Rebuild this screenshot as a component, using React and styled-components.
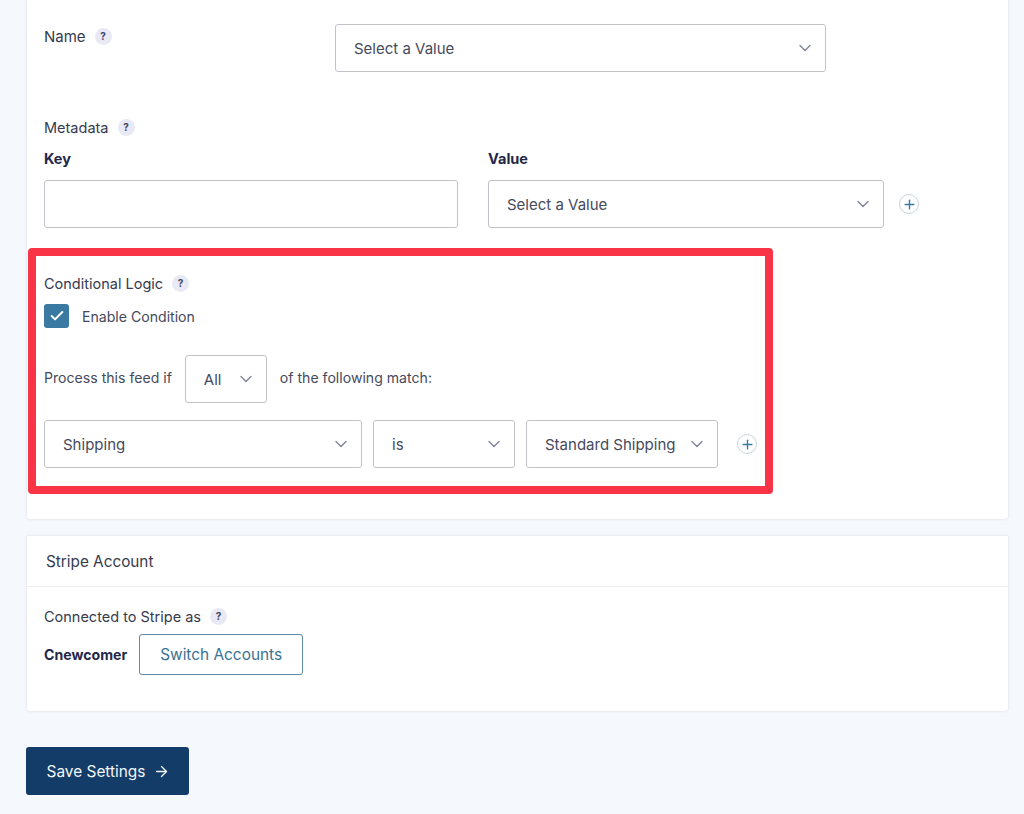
import styled, { createGlobalStyle } from "styled-components";
import { ArrowRight, Check, ChevronDown, Plus } from "lucide-react";

const GlobalStyle = createGlobalStyle`
  html, body {
    margin: 0;
    background: #f5f8fc;
  }

  body {
    font-family: Inter, "Liberation Sans", sans-serif;
    font-size: 14.1px;
    color: #464a5c;
    -webkit-font-smoothing: antialiased;
  }
`;

const Page = styled.div`
  width: 1024px;
  height: 814px;
  overflow: hidden;
  box-sizing: border-box;
  padding: 0 16px 0 26px;
`;

const Card = styled.section`
  box-sizing: border-box;
  margin-left: 1px;
  height: ${(props) => props.$height}px;
  margin-bottom: 17px;
  background: #fff;
  border-radius: 0 0 3px 3px;
  box-shadow: 0 0 3px rgba(40, 60, 90, 0.14);
`;

const CardBody = styled.div`
  padding: ${(props) => props.$pad || "24px 0 0 17px"};
`;

const NameRow = styled.div`
  display: grid;
  grid-template-columns: 291px 491px;
  height: 48px;
`;

const Label = styled.div`
  display: flex;
  align-items: center;
  gap: 9px;
  height: 24px;
  font-size: 14.5px;
  color: #363a4d;
`;

const NameLabel = styled(Label)`
  font-size: 15px;
`;

const Help = styled.span`
  display: inline-flex;
  align-items: center;
  justify-content: center;
  width: 17px;
  height: 17px;
  border-radius: 50%;
  background: #e9e9f6;
  color: #3d4668;
  font-size: 10px;
  font-weight: 700;
`;

const MetaLabel = styled(Label)`
  margin-top: 43px;
`;

const FieldGrid = styled.div`
  display: grid;
  grid-template-columns: 414px 396px 20px;
  column-gap: 30px;
  margin-top: 12px;
`;

const FieldHead = styled.div`
  height: 29px;
  line-height: 16px;
  font-size: 14.5px;
  font-weight: 700;
  color: #242748;
`;

const Column = styled.div`
  display: flex;
  flex-direction: column;
`;

const TextInput = styled.input`
  box-sizing: border-box;
  width: 100%;
  height: 48px;
  border: 1px solid #c2c3c8;
  border-radius: 3px;
  background: #fff;
`;

const Select = styled.div`
  box-sizing: border-box;
  flex: none;
  display: flex;
  align-items: center;
  justify-content: space-between;
  width: ${(props) => (props.$width ? `${props.$width}px` : "100%")};
  height: 48px;
  padding: 0 10px 0 18px;
  border: 1px solid #c2c3c8;
  border-radius: 3px;
  background: #fff;
  color: #464a5c;
  font-size: 15px;
  white-space: nowrap;

  svg {
    flex: none;
    color: #82879a;
  }
`;

const AddButton = styled.span`
  box-sizing: border-box;
  flex: none;
  display: inline-flex;
  align-items: center;
  justify-content: center;
  width: 20px;
  height: 20px;
  border: 1px solid #c8d5de;
  border-radius: 50%;
  color: #3a7a9e;
`;

const AddSlot = styled.div`
  display: flex;
  align-items: center;
  margin-top: 29px;
  margin-left: -15px;
`;

const Highlight = styled.div`
  box-sizing: border-box;
  width: 745px;
  height: 246px;
  margin: 20px 0 0 -16px;
  padding: 15px 0 0 8px;
  border: 8px solid #f83446;
  border-radius: 4px;
`;

const CheckRow = styled.div`
  display: flex;
  align-items: center;
  gap: 13px;
  margin-top: 9px;
`;

const CheckBox = styled.span`
  display: inline-flex;
  align-items: center;
  justify-content: center;
  width: 25px;
  height: 24px;
  border-radius: 3px;
  background: #3a79a2;
  color: #fff;
`;

const SentenceRow = styled.div`
  display: flex;
  align-items: center;
  gap: 13px;
  margin-top: 27px;
`;

const SentenceText = styled.span`
  margin-bottom: 4px;
`;

const RuleRow = styled.div`
  display: flex;
  align-items: center;
  gap: 11px;
  margin-top: 17px;
`;

const RuleAdd = styled(AddButton)`
  margin-left: 8px;
`;

const CardHeader = styled.header`
  box-sizing: border-box;
  height: 51px;
  padding: 1px 0 0 19px;
  display: flex;
  align-items: center;
  border-bottom: 1px solid #eceef2;
  font-size: 15.3px;
  color: #363a4d;
`;

const AccountRow = styled.div`
  display: flex;
  align-items: center;
  gap: 12px;
  margin-top: 6px;
`;

const AccountName = styled.span`
  font-weight: 700;
  color: #242748;
`;

const SwitchButton = styled.button`
  box-sizing: border-box;
  width: 164px;
  height: 41px;
  padding: 0;
  border: 1px solid #5f8ba6;
  border-radius: 3px;
  background: #fff;
  color: #3a7391;
  font: inherit;
  font-size: 15.4px;
`;

const SaveButton = styled.button`
  display: flex;
  align-items: center;
  justify-content: center;
  gap: 8px;
  box-sizing: border-box;
  width: 163px;
  height: 48px;
  margin-top: 36px;
  padding: 0 0 0 2px;
  border: 0;
  border-radius: 3px;
  background: #133d68;
  color: #f2f6fa;
  font: inherit;
  font-size: 15.4px;
`;

const Dropdown = ({ width, children }) => (
  <Select $width={width}>
    <span>{children}</span>
    <ChevronDown size={20} strokeWidth={1.7} />
  </Select>
);

const AddIcon = () => <Plus size={15} strokeWidth={2.2} />;

const App = () => {
  return (
    <Page>
      <GlobalStyle />
      <Card $height={519}>
        <CardBody>
          <NameRow>
            <NameLabel>
              Name <Help>?</Help>
            </NameLabel>
            <Dropdown>Select a Value</Dropdown>
          </NameRow>

          <MetaLabel>
            Metadata <Help>?</Help>
          </MetaLabel>
          <FieldGrid>
            <Column>
              <FieldHead>Key</FieldHead>
              <TextInput />
            </Column>
            <Column>
              <FieldHead>Value</FieldHead>
              <Dropdown>Select a Value</Dropdown>
            </Column>
            <AddSlot>
              <AddButton>
                <AddIcon />
              </AddButton>
            </AddSlot>
          </FieldGrid>

          <Highlight>
            <Label>
              Conditional Logic <Help>?</Help>
            </Label>
            <CheckRow>
              <CheckBox>
                <Check size={16} strokeWidth={3} />
              </CheckBox>
              Enable Condition
            </CheckRow>
            <SentenceRow>
              <SentenceText>Process this feed if</SentenceText>
              <Dropdown width={82}>All</Dropdown>
              <SentenceText>of the following match:</SentenceText>
            </SentenceRow>
            <RuleRow>
              <Dropdown width={318}>Shipping</Dropdown>
              <Dropdown width={142}>is</Dropdown>
              <Dropdown width={192}>Standard Shipping</Dropdown>
              <RuleAdd>
                <AddIcon />
              </RuleAdd>
            </RuleRow>
          </Highlight>
        </CardBody>
      </Card>

      <Card $height={175}>
        <CardHeader>Stripe Account</CardHeader>
        <CardBody $pad="17px 0 0 17px">
          <Label>
            Connected to Stripe as <Help>?</Help>
          </Label>
          <AccountRow>
            <AccountName>Cnewcomer</AccountName>
            <SwitchButton>Switch Accounts</SwitchButton>
          </AccountRow>
        </CardBody>
      </Card>

      <SaveButton>
        Save Settings <ArrowRight size={17} strokeWidth={1.9} />
      </SaveButton>
    </Page>
  );
};

export default App;
